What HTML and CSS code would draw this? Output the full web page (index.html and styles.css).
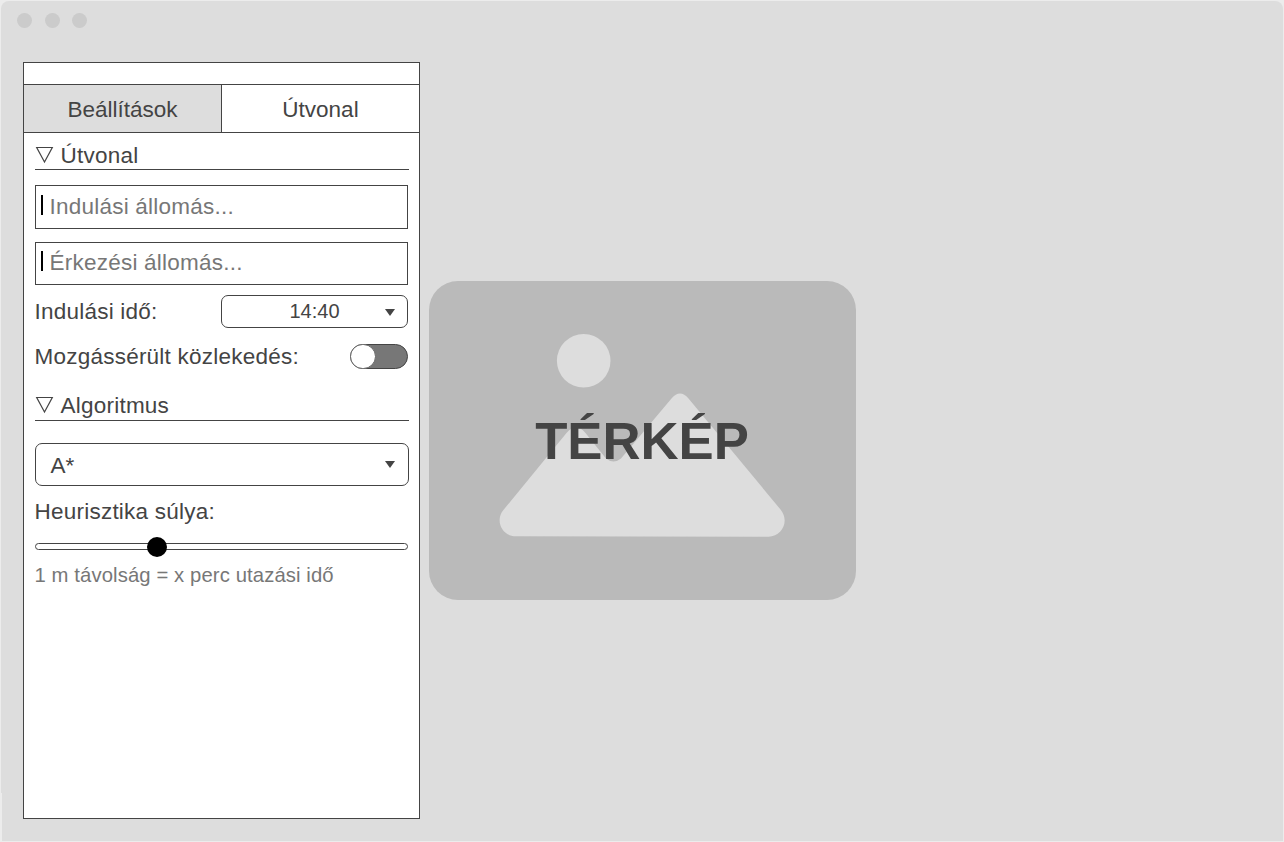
FILE: index.html
```html
<!DOCTYPE html>
<html lang="hu">
<head>
<meta charset="utf-8">
<title>Térkép</title>
<link rel="stylesheet" href="styles.css">
</head>
<body>
<div class="window">
  <header class="titlebar"><i class="dot"></i><i class="dot"></i><i class="dot"></i></header>
  <aside class="panel">
    <nav class="tabs">
      <div class="tab tab-active">Beállítások</div>
      <div class="tab">Útvonal</div>
    </nav>
    <div class="content">
      <h2 class="section">
        <svg class="collapse" width="20" height="18" viewBox="0 0 20 18"><path d="M1.700 1.500h15.600L9.500 16z"/></svg>
        <span>Útvonal</span>
      </h2>
      <div class="field field-from"><i class="caret"></i><span>Indulási állomás...</span></div>
      <div class="field field-to"><i class="caret"></i><span>Érkezési állomás...</span></div>
      <div class="row row-time">
        <span class="label">Indulási idő:</span>
        <div class="select select-time"><span>14:40</span><svg class="arrow" width="10" height="7" viewBox="0 0 10 7"><path d="M0 0h10L5 7z"/></svg></div>
      </div>
      <div class="row row-toggle">
        <span class="label">Mozgássérült közlekedés:</span>
        <div class="toggle"><i class="knob"></i></div>
      </div>
      <h2 class="section section-algo">
        <svg class="collapse" width="20" height="18" viewBox="0 0 20 18"><path d="M1.700 1.500h15.600L9.500 16z"/></svg>
        <span>Algoritmus</span>
      </h2>
      <div class="select select-algo"><span>A*</span><svg class="arrow" width="10" height="7" viewBox="0 0 10 7"><path d="M0 0h10L5 7z"/></svg></div>
      <div class="label weight">Heurisztika súlya:</div>
      <div class="slider"><i class="thumb"></i></div>
      <div class="hint">1 m távolság = x perc utazási idő</div>
    </div>
  </aside>
  <main class="map">
    <svg class="map-picture" width="427" height="319" viewBox="0 0 427 319">
      <circle cx="154.7" cy="79.8" r="26.8"/>
      <path d="M74 229.5L137.5 152Q147 140.500 156.500 152L177 177.500Q184.500 183.500 192 177.500L242.500 117.500Q251 107.500 259.500 117.500L351.500 228.500C361 240 353 255.700 339.500 255.700L86.500 255.200C73 255.200 66 240 74 229.500Z"/>
    </svg>
    <span class="map-title">TÉRKÉP</span>
  </main>
</div>
</body>
</html>
```
FILE: styles.css
```css
* { box-sizing: border-box; }
body {
  margin: 0;
  padding: 1px;
  height: 842px;
  overflow: hidden;
  background: #ececec;
  color: #444;
  font-family: "Liberation Sans", Arial, sans-serif;
  font-size: 22.5px;
}
.window {
  display: grid;
  grid-template: 61px 1fr / 397px 1fr;
  column-gap: 9px;
  height: 840px;
  padding: 0 0 22px 22px;
  background: linear-gradient(#ececec, #ececec) left bottom / 1px 48px no-repeat #ddd;
  border-radius: 8px 8px 0 0;
}
.titlebar {
  grid-column: 1 / 3;
  display: flex;
  gap: 12.5px;
  margin-left: -6px;
  padding-top: 12px;
}
.dot { width: 15px; height: 15px; border-radius: 50%; background: #cbcbcb; }
.panel { padding-top: 21px; background: #fff; border: 1px solid #444; }
.tabs { display: flex; height: 49px; border: solid #444; border-width: 1px 0; }
.tab { flex: 1; line-height: 49px; text-align: center; }
.tab-active { flex: 0 0 198px; background: #ddd; border-right: 1px solid #444; }
.content { display: flex; flex-direction: column; padding: 0 11px; font-size: 22.5px; letter-spacing: 0.23px; }
.section {
  display: flex;
  align-items: center;
  gap: 5.5px;
  width: 374px;
  height: 37px;
  margin: 0;
  padding-top: 9px;
  border-bottom: 1px solid #444;
  font-size: inherit;
  font-weight: normal;
  line-height: 27px;
}
.section-algo { padding-bottom: 1px; padding-top: 8px; }
.collapse { margin-bottom: 2px; fill: none; stroke: #444; stroke-width: 1.2; }
.field { display: flex; align-items: center; width: 373px; border: 1px solid #444; color: #777; line-height: 26px; }
.field-from { height: 44px; margin-top: 15px; }
.field-to { height: 43px; margin-top: 13px; padding-bottom: 1px; }
.field-to span { padding-bottom: 1px; }
.caret { width: 2px; height: 20px; margin: 0 6.5px 4px 5px; background: #000; }
.row { display: flex; justify-content: space-between; align-items: center; width: 373px; line-height: 26px; }
.label { margin-left: -0.5px; }
.row-time { height: 33px; margin-top: 10px; }
.row-toggle { height: 26px; margin: 16px 0 14px; }
.select { display: flex; align-items: center; border: 1px solid #444; border-radius: 7px; letter-spacing: 0; }
.select span { flex: 1; }
.arrow { fill: #444; }
.select-time { width: 187px; height: 33px; padding: 0 12px 0 11px; font-size: 20px; text-align: center; }
.select-time span { padding: 0 0 2px 11px; }
.select-time .arrow { margin-top: 2px; }
.select-algo { width: 374px; height: 43px; margin-top: 22px; padding: 0 13px 0 14.5px; line-height: 26px; }
.select-algo span { padding-top: 2px; }
.toggle { width: 58px; height: 25px; margin-bottom: 2px; background: #777; border: 1px solid #444; border-radius: 13px; }
.knob { display: block; width: 26px; height: 25px; margin: -1px; background: #fff; border: 1px solid #666; border-radius: 13px; }
.weight { height: 26px; margin-top: 13px; line-height: 26px; }
.slider { width: 373px; height: 7px; margin-top: 18px; border: 1px solid #444; border-radius: 4px; }
.thumb { display: block; width: 20px; height: 20px; margin: -7px 0 0 111px; background: #000; border-radius: 50%; }
.hint { margin: 14px 0 0 -0.5px; color: #777; font-size: 20.3px; letter-spacing: 0.1px; line-height: 23px; }
.map {
  display: grid;
  place-items: center;
  align-self: start;
  width: 427px;
  height: 319px;
  margin-top: 219px;
  background: #bababa;
  border-radius: 29px;
}
.map > * { grid-area: 1 / 1; }
.map-picture { fill: #ddd; }
.map-title { padding-right: 1px; font-size: 52.7px; font-weight: bold; }
```
